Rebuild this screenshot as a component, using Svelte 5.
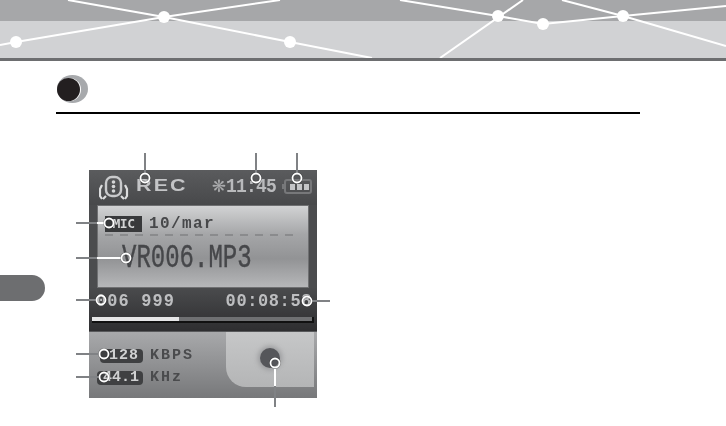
<script>
  const nodes = [[16,42],[164,17],[290,42],[498,16],[543,24],[623,16]];
  const lines = [
    "M0 45 L16 42 L164 17 L280 0",
    "M68 0 L164 17 L290 42 L372 58",
    "M440 58 L523 0",
    "M400 0 L498 16 L543 24 L623 16 L726 6",
    "M562 0 L623 16 L726 46"
  ];
  const leaders = [
    [145,153,145,174],[256,153,256,174],[297,153,297,174],
    [76,223,104,223],[76,258,121,258],[76,300,96,300],
    [76,354,99,354],[76,377,99,377],[312,301,330,301],[275,368,275,407]
  ];
  const rings = [[145,178],[256,178],[297,178],[109,223],[126,258],[101,300],[104,354],[104,377],[307,301],[275,363]];
  const dashes = Array.from({length: 13}, (_, i) => i);
</script>

<div class="page">
  <header class="banner">
    <svg width="726" height="58" viewBox="0 0 726 58" aria-hidden="true">
      <rect width="726" height="21" fill="#a6a7a9" />
      <rect y="21" width="726" height="37" fill="#d1d2d4" />
      {#each lines as d}
        <path {d} fill="none" stroke="#fff" stroke-width="2" />
      {/each}
      {#each nodes as [cx, cy]}
        <circle {cx} {cy} r="6" fill="#fff" />
      {/each}
    </svg>
  </header>

  <section class="title">
    <span class="bullet"><span class="bullet-core"></span></span>
  </section>

  <div class="content">
    <div class="rail"><div class="tab"></div></div>

    <div class="device">
      <div class="topbar">
        <svg class="micon" width="30" height="26" viewBox="0 0 30 26" aria-hidden="true">
          <rect x="7" y="2" width="15" height="19" rx="6" fill="none" stroke="#c9cacc" stroke-width="2.4" />
          <circle cx="14.5" cy="7" r="1.8" fill="#d4d5d6" />
          <circle cx="14.5" cy="11.5" r="1.8" fill="#d4d5d6" />
          <circle cx="14.5" cy="16" r="1.8" fill="#d4d5d6" />
          <path d="M3 10 L1 14 L1 21 L3 24 M26 10 L28 14 L28 21 L26 24 M7 21 L4 24 M22 21 L25 24" fill="none" stroke="#dcddde" stroke-width="2.2" />
        </svg>
        <span class="rec">REC</span>
        <span class="spacer"></span>
        <span class="snow">❋</span>
        <span class="clock">11:45</span>
        <svg class="batt" width="30" height="15" viewBox="0 0 30 15" aria-hidden="true">
          <rect x="3" y="1" width="26" height="13" rx="2" fill="none" stroke="#77787a" stroke-width="2" />
          <rect x="0" y="5" width="3" height="5" fill="#77787a" />
          <rect x="8" y="5" width="5" height="6" fill="#c4c5c7" />
          <rect x="15" y="5" width="5" height="6" fill="#c4c5c7" />
          <rect x="22" y="5" width="5" height="6" fill="#c4c5c7" />
        </svg>
      </div>

      <div class="lcd">
        <div class="lcd-top">
          <span class="mic">MIC</span>
          <span class="date">10/mar</span>
        </div>
        <div class="dashes">
          {#each dashes as i}<span class="dash"></span>{/each}
        </div>
        <div class="file">VR006.MP3</div>
      </div>

      <div class="transport">
        <div class="counts">
          <span class="count">006 999</span>
          <span class="elapsed">00:08:58</span>
        </div>
        <div class="track"><div class="fill"></div></div>
      </div>

      <div class="lower">
        <div class="rates">
          <div class="rate"><span class="badge b1">128</span><span class="unit">KBPS</span></div>
          <div class="rate"><span class="badge b2">44.1</span><span class="unit">KHz</span></div>
        </div>
        <div class="pad"><span class="knob"></span></div>
      </div>
    </div>
  </div>

  <svg class="callouts" width="726" height="426" viewBox="0 0 726 426" aria-hidden="true">
    {#each leaders as [x1, y1, x2, y2]}
      <line {x1} {y1} {x2} {y2} stroke="#808285" stroke-width="2" />
    {/each}
    <line x1="97" y1="223" x2="104" y2="223" stroke="#fff" stroke-width="2" />
    <line x1="97" y1="258" x2="121" y2="258" stroke="#fff" stroke-width="2" />
    <line x1="275" y1="369" x2="275" y2="386" stroke="#fff" stroke-width="2" />
    {#each rings as [cx, cy]}
      <circle {cx} {cy} r="4.5" fill="none" stroke="#222" stroke-width="3" opacity="0.3" />
      <circle {cx} {cy} r="4.5" fill="none" stroke="#fff" stroke-width="1.8" />
    {/each}
  </svg>
</div>

<style>
  :global(body) { margin: 0; background: #fff; }
  .page { position: relative; width: 726px; height: 426px; overflow: hidden; font-family: "Liberation Sans", sans-serif; }
  .banner { height: 58px; border-bottom: 3px solid #6d6e70; }
  .banner svg { display: block; }

  .title { margin: 0 86px 0 56px; padding-top: 14px; height: 37px; border-bottom: 2px solid #000; box-sizing: content-box; }
  .bullet { display: block; width: 31px; height: 28px; margin-left: 1px; border-radius: 50%; background: #a7a9ac; position: relative; }
  .bullet-core { position: absolute; left: 0; top: 3px; width: 23px; height: 23px; border-radius: 50%; background: #231f20; box-shadow: 1px 0 0 #fff; }

  .content { display: flex; margin-top: 56px; }
  .rail { width: 89px; flex: none; }
  .tab { width: 45px; height: 26px; margin-top: 105px; background: #6d6e70; border-radius: 0 13px 13px 0; }

  .device { width: 228px; height: 228px; background: #4b4c4e; display: flex; flex-direction: column; }
  .device > * { filter: blur(0.7px); }

  .topbar { height: 35px; display: flex; align-items: center; padding: 0 5px 3px 10px; box-sizing: border-box; background: linear-gradient(#5a5b5d, #48494b); color: #bfc0c2; }
  .micon { margin-top: 4px; }
  .rec { display: inline-block; margin-left: 7px; font: 700 16px/1 "Liberation Sans", sans-serif; letter-spacing: 1.6px; transform: scaleX(1.34); transform-origin: left center; color: #c4c5c7; }
  .spacer { flex: 1; }
  .snow { font: 17px/1 "DejaVu Sans", sans-serif; color: #a9aaac; }
  .clock { display: inline-block; font: 700 18px/1 "Liberation Mono", monospace; margin-right: 6px; letter-spacing: -0.8px; color: #b9babc; transform: scaleY(1.12); }

  .lcd { height: 83px; margin: 0 8px; padding: 10px 7px 0; box-sizing: border-box; background: linear-gradient(#d2d3d4 0%, #a5a6a8 35%, #929395 65%, #b6b7b9 100%); display: flex; flex-direction: column; border: 1px solid #6f7072; }
  .lcd-top { display: flex; align-items: center; gap: 7px; height: 16px; }
  .mic { width: 37px; height: 16px; background: #38393b; color: #d4d5d6; font: 700 13px/16px "DejaVu Sans Mono", monospace; text-align: center; letter-spacing: -0.5px; }
  .date { font: 700 16px/1 "Liberation Mono", monospace; letter-spacing: 1.4px; color: #47484a; }
  .dashes { display: flex; gap: 7px; margin-top: 2px; }
  .dash { width: 8px; height: 1.5px; background: #8a8b8d; }
  .file { margin: 9px 0 0 17px; font: 400 24px/28px "Liberation Mono", monospace; color: #46474a; -webkit-text-stroke: 0.3px #46474a; transform: scaleY(1.35); transform-origin: left center; white-space: nowrap; }

  .transport { height: 43px; padding: 5px 3px 0; box-sizing: border-box; background: linear-gradient(#4a4b4d, #2e2e30); }
  .counts { display: flex; justify-content: space-between; padding: 0 2px 0 4px; font: 700 17px/17px "Liberation Mono", monospace; color: #bdbec0; }
  .count { letter-spacing: 1.1px; transform: scaleY(1.1); }
  .elapsed { letter-spacing: 0.6px; transform: scaleY(1.1); }
  .track { margin-top: 7px; background: #6f7072; border-bottom: 2px solid #111; border-right: 2px solid #111; height: 4px; }
  .fill { width: 87px; height: 4px; background: #e6e6e7; }

  .lower { flex: 1; display: flex; background: linear-gradient(#a8a9ab, #77787a); border-top: 1px solid #58595b; }
  .rates { flex: 1; padding: 17px 0 0 8px; display: flex; flex-direction: column; gap: 8px; }
  .rate { display: flex; align-items: center; gap: 7px; height: 14px; }
  .badge { display: block; box-sizing: border-box; height: 14px; background: #3f4042; color: #d0d1d2; border-radius: 4px; font: 700 15px/14px "Liberation Mono", monospace; text-align: right; padding-right: 4px; letter-spacing: 1px; }
  .b1 { width: 43px; margin-left: 3px; }
  .b2 { width: 46px; letter-spacing: 0; }
  .unit { font: 700 15px/14px "Liberation Mono", monospace; letter-spacing: 2px; color: #4a4b4d; }
  .pad { width: 88px; height: 55px; margin-right: 3px; background: linear-gradient(#c6c7c8, #b4b5b6); border-radius: 0 0 0 20px; display: flex; justify-content: center; padding-top: 16px; box-sizing: border-box; }
  .knob { width: 20px; height: 20px; border-radius: 50%; background: #55565a; box-shadow: 0 0 5px 2px #9a9b9d; }

  .callouts { position: absolute; left: 0; top: 0; pointer-events: none; }
</style>
